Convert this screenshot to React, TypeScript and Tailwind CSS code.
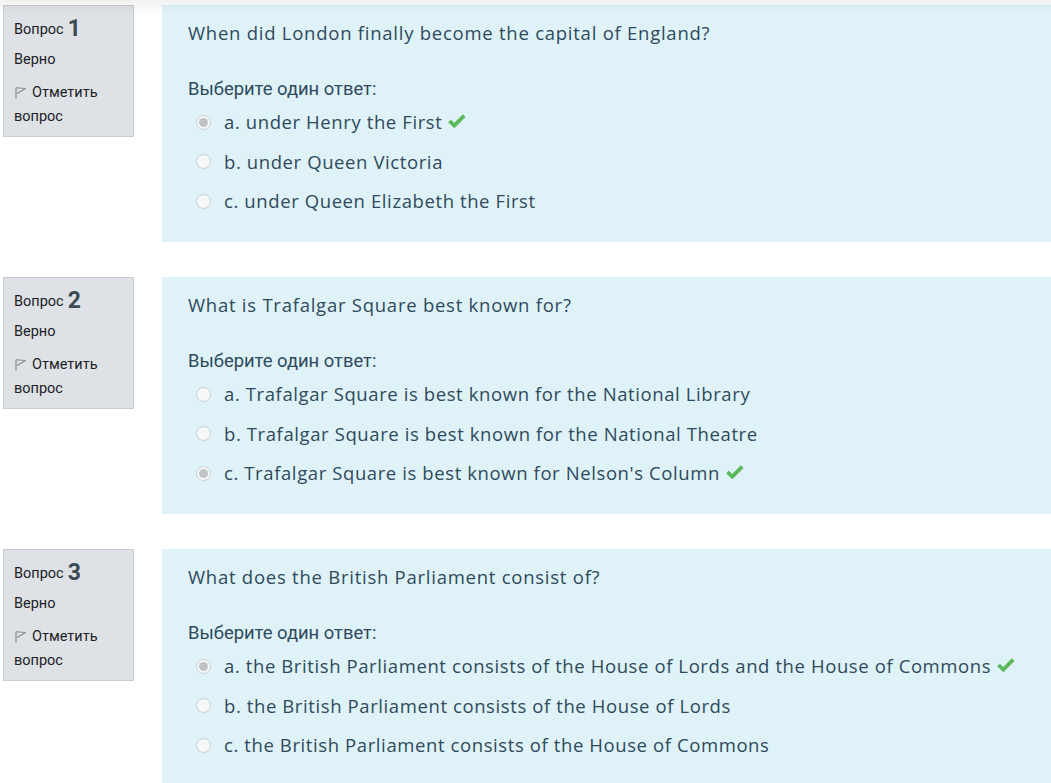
import React from "react";

type Answer = { label: string; checked: boolean };
type Q = { n: number; text: string; answers: Answer[] };

const questions: Q[] = [
  {
    n: 1,
    text: "When did London finally become the capital of England?",
    answers: [
      { label: "a. under Henry the First", checked: true },
      { label: "b. under Queen Victoria", checked: false },
      { label: "c. under Queen Elizabeth the First", checked: false },
    ],
  },
  {
    n: 2,
    text: "What is Trafalgar Square best known for?",
    answers: [
      { label: "a. Trafalgar Square is best known for the National Library", checked: false },
      { label: "b. Trafalgar Square is best known for the National Theatre", checked: false },
      { label: "c. Trafalgar Square is best known for Nelson's Column", checked: true },
    ],
  },
  {
    n: 3,
    text: "What does the British Parliament consist of?",
    answers: [
      { label: "a. the British Parliament consists of the House of Lords and the House of Commons", checked: true },
      { label: "b. the British Parliament consists of the House of Lords", checked: false },
      { label: "c. the British Parliament consists of the House of Commons", checked: false },
    ],
  },
];

const Flag = () => (
  <svg width="13" height="13" viewBox="0 0 13 13" className="inline-block mr-[5px] -mt-[2px]">
    <path d="M2 1.5 L2 12.5" stroke="#8a8a8a" strokeWidth="1.2" fill="none" />
    <path d="M2 1.8 L11.5 2.5 L3 7.5" stroke="#8a8a8a" strokeWidth="1.1" fill="none" strokeLinejoin="round" />
  </svg>
);

const Check = () => (
  <svg width="18" height="15" viewBox="0 0 18 15" className="inline-block ml-[6px] -mt-[3px]">
    <path d="M1.5 8 L6.3 12.6 L16.2 2.6" stroke="#5cb85c" strokeWidth="3.8" fill="none" strokeLinecap="butt" />
  </svg>
);

const Radio = ({ checked }: { checked: boolean }) => (
  <span className="w-[15px] h-[15px] rounded-full border border-[#c9cdd1] bg-[#f6f7f8] flex items-center justify-center shrink-0">
    {checked && <span className="w-[9px] h-[9px] rounded-full bg-[#c0c3c6]" />}
  </span>
);

export default function App() {
  return (
    <div className="relative min-h-[783px] bg-white overflow-hidden">
      <div className="pointer-events-none absolute top-0 left-0 right-0 h-[14px] bg-gradient-to-b from-[#0000000f] to-transparent" />
      <div className="flex flex-col gap-[35px] pt-[5px] pl-[3px]">
        {questions.map((q) => (
          <div key={q.n} className="flex items-start gap-[28px]">
            <div
              className="w-[131px] h-[132px] shrink-0 border border-[#c8cdd3] bg-[#dee2e6] px-[10px] pt-[8px] text-[14.5px] text-[#1d2125]"
              style={{ fontFamily: "Roboto, 'Liberation Sans', sans-serif" }}
            >
              <div className="h-[26px] flex items-end leading-none">
                <span className="mb-[3px]">Вопрос</span>
                <span className="ml-[4px] text-[23px] font-bold text-[#3c4a54] leading-none">{q.n}</span>
              </div>
              <div className="mt-[8px] leading-[24px]">Верно</div>
              <div className="mt-[9px] leading-[24px]">
                <Flag />Отметить вопрос
              </div>
            </div>
            <div
              className="flex-1 bg-[#def2f8] pl-[26px] pt-[14px] pb-[21px] text-[#2e4a5c] tracking-[0.75px]"
              style={{ fontFamily: "'Open Sans', sans-serif" }}
            >
              <div className="text-[18.5px] leading-[27px]">{q.text}</div>
              <div
                className="mt-[30px] text-[18.4px] leading-[25px] tracking-normal"
                style={{ fontFamily: "Roboto, 'Liberation Sans', sans-serif" }}
              >
                Выберите один ответ:
              </div>
              <div className="mt-[1.5px]">
                {q.answers.map((a) => (
                  <div key={a.label} className="h-[39.5px] flex items-center pl-[8px] text-[18.5px] tracking-[0.6px]">
                    <Radio checked={a.checked} />
                    <span className="ml-[13px]">{a.label}</span>
                    {a.checked && <Check />}
                  </div>
                ))}
              </div>
            </div>
          </div>
        ))}
      </div>
    </div>
  );
}
